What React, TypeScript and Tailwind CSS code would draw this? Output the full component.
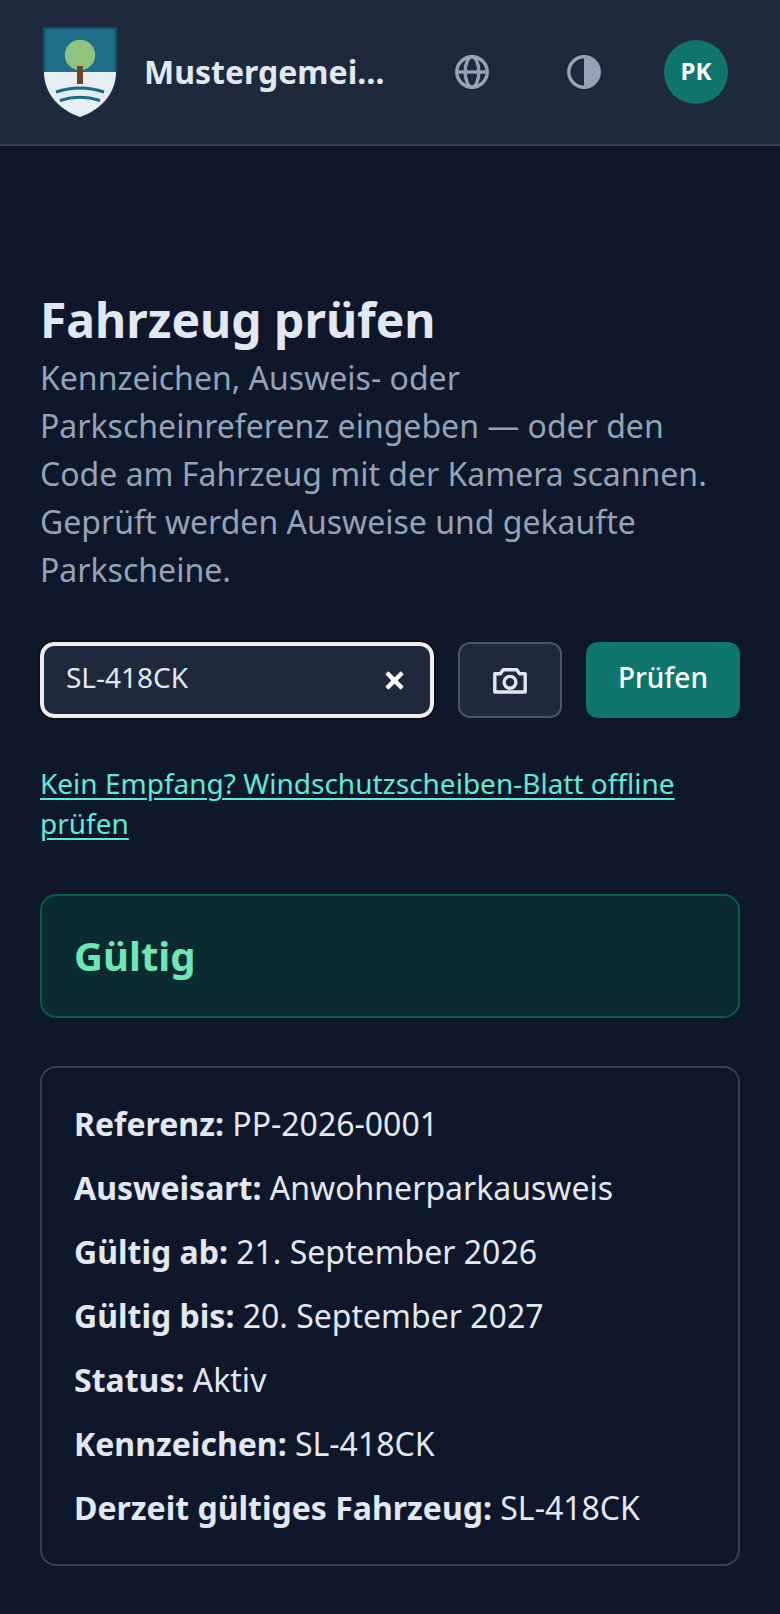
import { useState } from "react";

const details = [
  { label: "Referenz", value: "PP-2026-0001" },
  { label: "Ausweisart", value: "Anwohnerparkausweis" },
  { label: "Gültig ab", value: "21. September 2026" },
  { label: "Gültig bis", value: "20. September 2027" },
  { label: "Status", value: "Aktiv" },
  { label: "Kennzeichen", value: "SL-418CK" },
  { label: "Derzeit gültiges Fahrzeug", value: "SL-418CK" },
];

function Crest() {
  return (
    <svg viewBox="0 0 80 96" className="h-24 w-20 shrink-0" aria-hidden="true">
      <clipPath id="crest-shape">
        <path d="M4 4H76V48C76 70 60 86 40 93C20 86 4 70 4 48Z" />
      </clipPath>
      <path d="M4 4H76V48C76 70 60 86 40 93C20 86 4 70 4 48Z" fill="none" stroke="#0f4c5c" strokeOpacity=".6" strokeWidth="2" />
      <g clipPath="url(#crest-shape)">
        <rect width="80" height="96" fill="#e8edf2" />
        <rect width="80" height="48" fill="#1f6f8b" />
      </g>
      <path d="M4 48V4H76V48" fill="none" stroke="#0f4c5c" strokeOpacity=".6" strokeWidth="3" />
      <circle cx="40" cy="31" r="15.2" fill="#90c47c" />
      <rect x="37" y="42" width="6" height="18" fill="#6b4528" />
      <path d="M16 68Q40 60 64 68M20 76.5Q40 70 60 76.5" fill="none" stroke="#146a88" strokeWidth="3" />
    </svg>
  );
}

function GlobeIcon() {
  return (
    <svg viewBox="0 0 40 40" className="size-10" fill="none" stroke="currentColor" strokeWidth="3.4" aria-hidden="true">
      <circle cx="20" cy="20" r="15.2" />
      <ellipse cx="20" cy="20" rx="6.8" ry="15.2" />
      <path d="M4.8 20H35.2" />
    </svg>
  );
}

function ContrastIcon() {
  return (
    <svg viewBox="0 0 40 40" className="size-10" fill="none" stroke="currentColor" strokeWidth="3.4" aria-hidden="true">
      <circle cx="20" cy="20" r="15.2" />
      <path d="M20 4.8A15.2 15.2 0 0 1 20 35.2Z" fill="currentColor" stroke="none" />
    </svg>
  );
}

function CameraIcon() {
  return (
    <svg viewBox="0 0 40 40" className="size-10" fill="none" stroke="currentColor" strokeWidth="3.4" strokeLinejoin="round" aria-hidden="true">
      <path d="M4.8 13.7H10.4L13.2 9.8H26.8L29.6 13.7H35.2V32H4.8Z" />
      <circle cx="20" cy="22.3" r="5.9" />
    </svg>
  );
}

export default function App() {
  const [query, setQuery] = useState("SL-418CK");

  return (
    <div className="min-h-screen bg-[#0f172a] font-['Noto_Sans',sans-serif] text-[32px] leading-12 text-slate-200 scheme-dark">
      <header className="flex items-center gap-6 border-b-2 border-[#334155] bg-[#1e293b] px-10 py-6">
        <Crest />
        <div className="min-w-0 flex-1 pr-2">
          <p className="truncate font-bold">Mustergemeinde</p>
        </div>
        <nav className="flex gap-6 text-[#94a3b8]" aria-label="Einstellungen">
          <button type="button" aria-label="Sprache" className="grid size-22 place-items-center">
            <GlobeIcon />
          </button>
          <button type="button" aria-label="Darstellung" className="grid size-22 place-items-center">
            <ContrastIcon />
          </button>
          <button type="button" aria-label="Konto" className="grid size-22 place-items-center">
            <span className="grid size-16 place-items-center rounded-full bg-[#0f766e] pb-0.5 text-2xl leading-8 font-bold text-white">
              PK
            </span>
          </button>
        </nav>
      </header>

      <main className="flex flex-col gap-12 px-10 pt-36 pb-12">
        <div>
          <h1 className="mb-1 text-5xl leading-15 font-bold">Fahrzeug prüfen</h1>
          <p className="text-[#94a3b8]">
            Kennzeichen, Ausweis- oder Parkscheinreferenz eingeben — oder den Code am Fahrzeug mit der Kamera scannen.
            Geprüft werden Ausweise und gekaufte Parkscheine.
          </p>
        </div>

        <div className="flex flex-col gap-[45px] pb-[3px] text-[28px] leading-10">
          <form className="flex gap-6" onSubmit={(event) => event.preventDefault()}>
            <input
              type="search"
              aria-label="Kennzeichen, Ausweis- oder Parkscheinreferenz"
              value={query}
              onChange={(event) => setQuery(event.target.value)}
              className="h-19 min-w-0 flex-1 rounded-[14px] border-4 border-[#eeeeee] bg-[#1e293b] px-[22px] pb-1.5 outline-2 outline-[#101010] [&::-webkit-search-cancel-button]:mt-1.5 [&::-webkit-search-cancel-button]:mr-1 [&::-webkit-search-cancel-button]:opacity-100"
            />
            <button
              type="button"
              aria-label="Code scannen"
              className="grid h-19 w-26 place-items-center rounded-xl border-2 border-[#475569] bg-[#1e293b]"
            >
              <CameraIcon />
            </button>
            <button type="submit" className="h-19 rounded-xl bg-[#0f766e] px-8 pb-1.5 font-medium text-white">
              Prüfen
            </button>
          </form>

          <a href="#offline" className="text-[#5eead4] underline decoration-2 underline-offset-4">
            Kein Empfang? Windschutzscheiben-Blatt offline prüfen
          </a>
        </div>

        <section className="rounded-2xl border-2 border-[#065f46] bg-[#0c2b31] p-8" role="status">
          <p className="text-[40px] leading-14 font-bold text-[#6ee7b7]">Gültig</p>
        </section>

        <dl className="flex flex-col gap-4 rounded-2xl border-2 border-[#334155] p-8">
          {details.map(({ label, value }) => (
            <div key={label}>
              <dt className="inline font-bold">{label}:</dt> <dd className="inline">{value}</dd>
            </div>
          ))}
        </dl>
      </main>
    </div>
  );
}
